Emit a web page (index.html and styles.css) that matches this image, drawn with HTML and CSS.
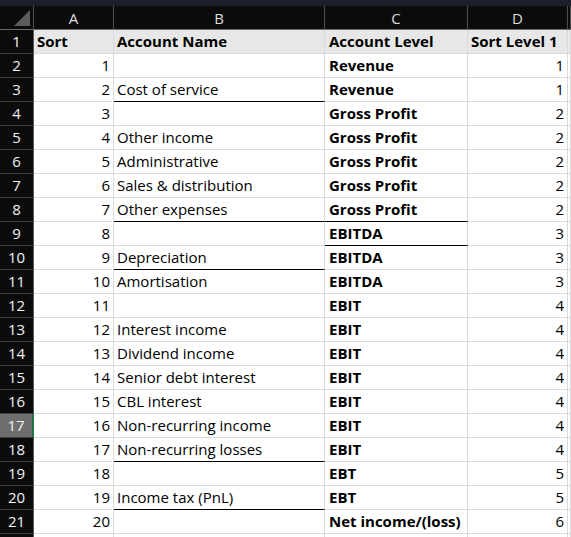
FILE: index.html
```html
<!DOCTYPE html>
<html>
<head>
<meta charset="utf-8">
<link rel="stylesheet" href="styles.css">
</head>
<body>
<div class="topbar"></div>
<div class="sheet">
  <div class="row colhdr">
    <div class="c rh corner"><span class="tri"></span></div>
    <div class="c">A</div>
    <div class="c">B</div>
    <div class="c">C</div>
    <div class="c">D</div>
    <div class="c"></div>
  </div>
  <div class="row first">
    <div class="c rh">1</div>
    <div class="c txt hb">Sort</div>
    <div class="c txt hb">Account Name</div>
    <div class="c txt hb lpad">Account Level</div>
    <div class="c txt hb">Sort Level 1</div>
    <div class="c"></div>
  </div>
  <div class="row"><div class="c rh">2</div><div class="c num">1</div><div class="c txt"></div><div class="c lvl">Revenue</div><div class="c num">1</div><div class="c"></div></div>
  <div class="row"><div class="c rh">3</div><div class="c num">2</div><div class="c txt bb">Cost of service</div><div class="c lvl">Revenue</div><div class="c num">1</div><div class="c"></div></div>
  <div class="row"><div class="c rh">4</div><div class="c num">3</div><div class="c txt"></div><div class="c lvl">Gross Profit</div><div class="c num">2</div><div class="c"></div></div>
  <div class="row"><div class="c rh">5</div><div class="c num">4</div><div class="c txt">Other income</div><div class="c lvl">Gross Profit</div><div class="c num">2</div><div class="c"></div></div>
  <div class="row"><div class="c rh">6</div><div class="c num">5</div><div class="c txt">Administrative</div><div class="c lvl">Gross Profit</div><div class="c num">2</div><div class="c"></div></div>
  <div class="row"><div class="c rh">7</div><div class="c num">6</div><div class="c txt">Sales &amp; distribution</div><div class="c lvl">Gross Profit</div><div class="c num">2</div><div class="c"></div></div>
  <div class="row"><div class="c rh">8</div><div class="c num">7</div><div class="c txt bb">Other expenses</div><div class="c lvl bb">Gross Profit</div><div class="c num">2</div><div class="c"></div></div>
  <div class="row"><div class="c rh">9</div><div class="c num">8</div><div class="c txt"></div><div class="c lvl bb">EBITDA</div><div class="c num">3</div><div class="c"></div></div>
  <div class="row"><div class="c rh">10</div><div class="c num">9</div><div class="c txt bb">Depreciation</div><div class="c lvl">EBITDA</div><div class="c num">3</div><div class="c"></div></div>
  <div class="row"><div class="c rh">11</div><div class="c num">10</div><div class="c txt">Amortisation</div><div class="c lvl">EBITDA</div><div class="c num">3</div><div class="c"></div></div>
  <div class="row"><div class="c rh">12</div><div class="c num">11</div><div class="c txt"></div><div class="c lvl">EBIT</div><div class="c num">4</div><div class="c"></div></div>
  <div class="row"><div class="c rh">13</div><div class="c num">12</div><div class="c txt">Interest income</div><div class="c lvl">EBIT</div><div class="c num">4</div><div class="c"></div></div>
  <div class="row"><div class="c rh">14</div><div class="c num">13</div><div class="c txt">Dividend income</div><div class="c lvl">EBIT</div><div class="c num">4</div><div class="c"></div></div>
  <div class="row"><div class="c rh">15</div><div class="c num">14</div><div class="c txt">Senior debt interest</div><div class="c lvl">EBIT</div><div class="c num">4</div><div class="c"></div></div>
  <div class="row"><div class="c rh">16</div><div class="c num">15</div><div class="c txt">CBL interest</div><div class="c lvl">EBIT</div><div class="c num">4</div><div class="c"></div></div>
  <div class="row"><div class="c rh sel">17</div><div class="c num">16</div><div class="c txt">Non-recurring income</div><div class="c lvl">EBIT</div><div class="c num">4</div><div class="c"></div></div>
  <div class="row"><div class="c rh">18</div><div class="c num">17</div><div class="c txt bb">Non-recurring losses</div><div class="c lvl">EBIT</div><div class="c num">4</div><div class="c"></div></div>
  <div class="row"><div class="c rh">19</div><div class="c num">18</div><div class="c txt"></div><div class="c lvl">EBT</div><div class="c num">5</div><div class="c"></div></div>
  <div class="row"><div class="c rh">20</div><div class="c num">19</div><div class="c txt bb">Income tax (PnL)</div><div class="c lvl">EBT</div><div class="c num">5</div><div class="c"></div></div>
  <div class="row"><div class="c rh">21</div><div class="c num">20</div><div class="c txt"></div><div class="c lvl">Net income/(loss)</div><div class="c num">6</div><div class="c"></div></div>
  <div class="row"><div class="c rh"></div><div class="c num"></div><div class="c txt"></div><div class="c lvl"></div><div class="c num"></div><div class="c"></div></div>
</div>
</body>
</html>
```
FILE: styles.css
```css
html, body {
  margin: 0;
  padding: 0;
  background: #ffffff;
  overflow: hidden;
}
body {
  width: 571px;
  height: 537px;
  font-family: "Open Sans", "Noto Sans", sans-serif;
}
.topbar {
  height: 6px;
  background: #1c2029;
}
.row {
  display: grid;
  grid-template-columns: 34px 80px 211px 143px 100px 1fr;
  height: 24px;
}
.c {
  box-sizing: border-box;
  border-right: 1px solid #dadada;
  border-bottom: 1px solid #dadada;
  height: 24px;
  display: flex;
  align-items: center;
  white-space: nowrap;
  overflow: hidden;
  font-size: 15px;
  color: #000;
  padding-bottom: 2px;
}
.colhdr .c {
  background: #0b0b0b;
  color: #dedede;
  font-size: 15px;
  justify-content: center;
  border-right-color: #4e4e4e;
  border-bottom-color: #6a6a6a;
  padding-top: 1px;
  padding-bottom: 0;
}
.rh {
  background: #0b0b0b;
  color: #f2f2f2;
  justify-content: center;
  border-right-color: #5a5a5a;
  border-bottom-color: #3e3e3e;
  font-size: 15px;
}
.rh.sel {
  background: #6e6e6e;
  border-right: 2px solid #217346;
}
.corner {
  position: relative;
}
.tri {
  position: absolute;
  left: 14px;
  top: 4px;
  width: 0;
  height: 0;
  border-left: 16px solid transparent;
  border-bottom: 16px solid #5c5c5c;
}
.first .c:not(.rh) {
  background: #e7e7e7;
}
.txt {
  padding-left: 3px;
}
.lpad {
  padding-left: 4px;
}
.hb {
  font-weight: 700;
}
.num {
  justify-content: flex-end;
  padding-right: 3px;
  font-size: 15px;
}
.lvl {
  padding-left: 4px;
  font-family: "Open Sans", sans-serif;
  font-weight: 700;
  font-size: 15px;
}
.bb {
  border-bottom-color: #000;
}
```
